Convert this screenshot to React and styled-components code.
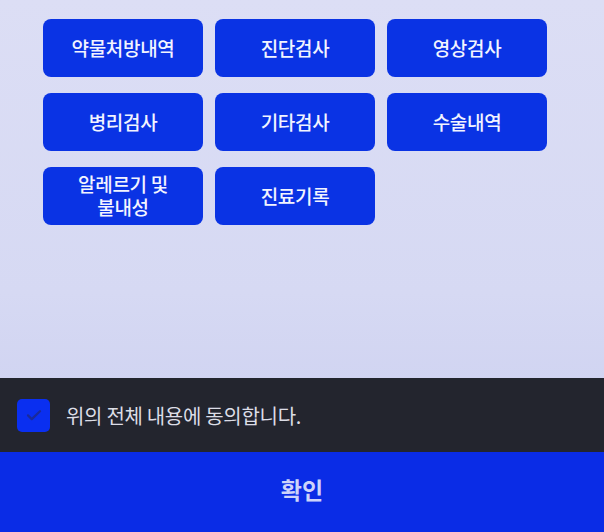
import React, { useState } from 'react';
import styled, { createGlobalStyle } from 'styled-components';

const GlobalStyle = createGlobalStyle`
    html, body {
        margin: 0;
        padding: 0;
    }
    body {
        font-family: "Noto Sans CJK KR", "Noto Sans", sans-serif;
    }
`;

const Screen = styled.div`
    width: 604px;
    height: 532px;
    display: flex;
    flex-direction: column;
    background: linear-gradient(180deg, #dcdef5 0%, #d6d9f3 55%, #c8ccef 100%);
    overflow: hidden;
`;

const Menu = styled.div`
    flex: 1;
    display: grid;
    grid-template-columns: repeat(3, 160px);
    grid-auto-rows: 58px;
    column-gap: 12px;
    row-gap: 16px;
    align-content: start;
    padding: 19px 0 0 43px;
`;

const MenuButton = styled.button`
    border: none;
    border-radius: 8px;
    background: #0a33e4;
    color: #f2f4ff;
    font-family: inherit;
    font-size: 19px;
    font-weight: 500;
    line-height: 23px;
    letter-spacing: -0.3px;
    padding: 0 6px 2px;
    white-space: pre-line;
    cursor: pointer;
`;

const AgreeBar = styled.label`
    height: 74px;
    display: flex;
    align-items: center;
    gap: 16px;
    padding-left: 17px;
    background: #23252e;
    cursor: pointer;
`;

const CheckBox = styled.span`
    width: 33px;
    height: 33px;
    border-radius: 5px;
    background: ${(props) => (props.checked ? '#0a2ff0' : 'transparent')};
    border: ${(props) => (props.checked ? 'none' : '2px solid #8890b0')};
    display: flex;
    align-items: center;
    justify-content: center;
`;

const AgreeText = styled.span`
    color: #dcdde6;
    font-size: 20px;
    letter-spacing: -0.3px;
`;

const ConfirmButton = styled.button`
    height: 80px;
    border: none;
    background: #0a2ce6;
    color: #cdd3fa;
    font-family: inherit;
    font-size: 23px;
    font-weight: 700;
    padding-bottom: 8px;
    cursor: pointer;
`;

const items = [
    '약물처방내역',
    '진단검사',
    '영상검사',
    '병리검사',
    '기타검사',
    '수술내역',
    '알레르기 및\n불내성',
    '진료기록',
];

export default function App() {
    const [agreed, setAgreed] = useState(true);

    return (
        <>
            <GlobalStyle />
            <Screen>
                <Menu>
                    {items.map((item) => (
                        <MenuButton key={item}>{item}</MenuButton>
                    ))}
                </Menu>
                <AgreeBar onClick={() => setAgreed(!agreed)}>
                    <CheckBox checked={agreed}>
                        {agreed && (
                            <svg width="18" height="18" viewBox="0 0 24 24" fill="none">
                                <path
                                    d="M4 12.5l5 5L20 7"
                                    stroke="#1a2a9a"
                                    strokeWidth="3"
                                    strokeLinecap="round"
                                    strokeLinejoin="round"
                                />
                            </svg>
                        )}
                    </CheckBox>
                    <AgreeText>위의 전체 내용에 동의합니다.</AgreeText>
                </AgreeBar>
                <ConfirmButton>확인</ConfirmButton>
            </Screen>
        </>
    );
}
